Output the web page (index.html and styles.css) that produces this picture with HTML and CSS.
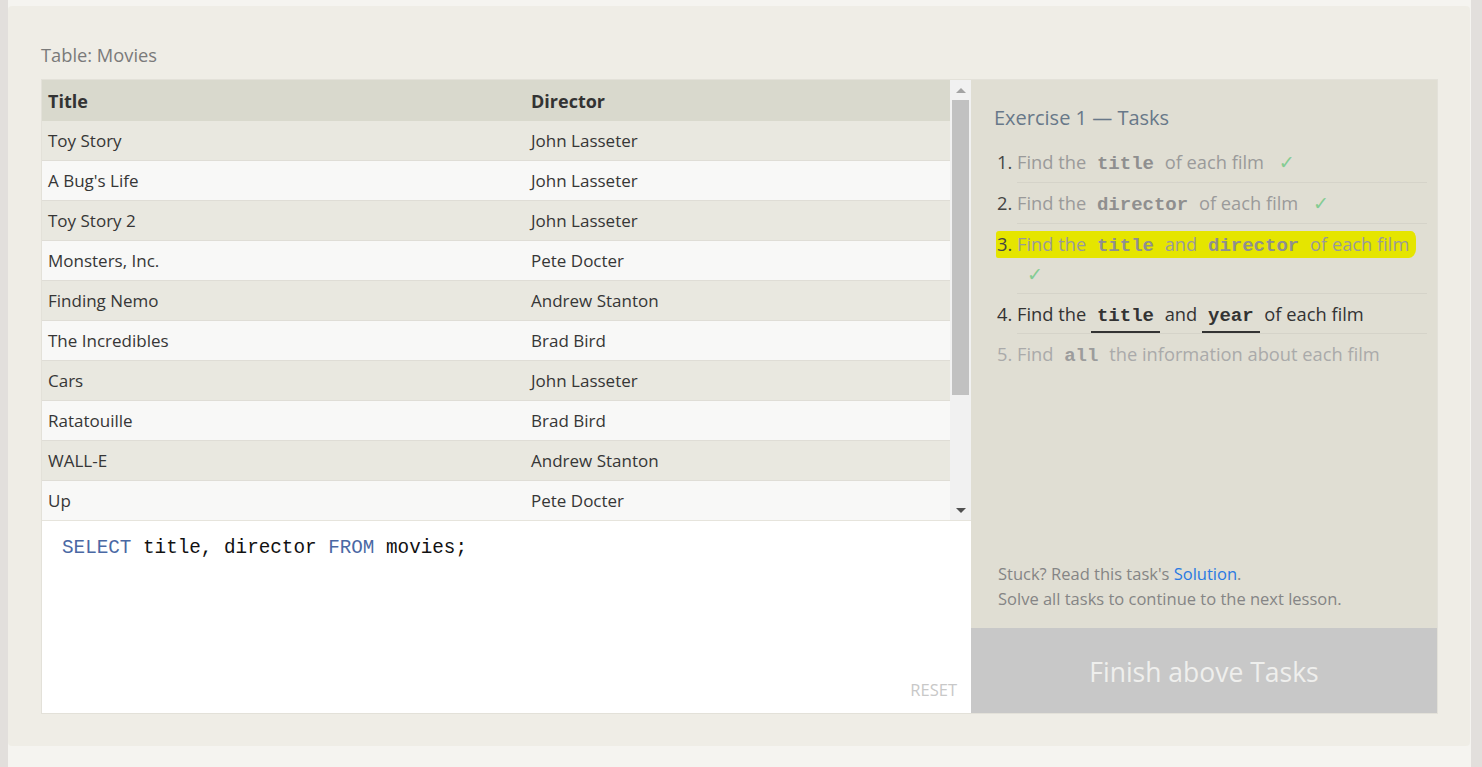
FILE: index.html
```html
<!DOCTYPE html>
<html>
<head>
<meta charset="utf-8">
<link rel="stylesheet" href="styles.css">
</head>
<body>
<div class="page">
  <div class="card">
    <div class="label">Table: Movies</div>
    <div class="widget">
      <div class="left">
        <div class="table-area">
          <div class="table-wrap">
            <table class="movies">
              <thead>
                <tr><th class="c1">Title</th><th>Director</th></tr>
              </thead>
              <tbody>
                <tr><td>Toy Story</td><td>John Lasseter</td></tr>
                <tr><td>A Bug's Life</td><td>John Lasseter</td></tr>
                <tr><td>Toy Story 2</td><td>John Lasseter</td></tr>
                <tr><td>Monsters, Inc.</td><td>Pete Docter</td></tr>
                <tr><td>Finding Nemo</td><td>Andrew Stanton</td></tr>
                <tr><td>The Incredibles</td><td>Brad Bird</td></tr>
                <tr><td>Cars</td><td>John Lasseter</td></tr>
                <tr><td>Ratatouille</td><td>Brad Bird</td></tr>
                <tr><td>WALL-E</td><td>Andrew Stanton</td></tr>
                <tr><td>Up</td><td>Pete Docter</td></tr>
              </tbody>
            </table>
          </div>
          <div class="scrollbar">
            <div class="sb-btn"><span class="tri-up"></span></div>
            <div class="sb-track"><div class="sb-thumb"></div></div>
            <div class="sb-btn"><span class="tri-down"></span></div>
          </div>
        </div>
        <div class="editor">
          <div class="code"><span class="kw">SELECT</span> title, director <span class="kw">FROM</span> movies;</div>
          <div class="reset">RESET</div>
        </div>
      </div>
      <div class="panel">
        <div class="tasks">
          <div class="heading">Exercise 1 — Tasks</div>
          <ol class="task-list">
            <li class="done"><span class="num">1.</span><div class="txt">Find the <code>title</code> of each film <span class="check">✓</span></div></li>
            <li class="done"><span class="num">2.</span><div class="txt">Find the <code>director</code> of each film <span class="check">✓</span></div></li>
            <li class="done marked"><span class="mark"></span><span class="num">3.</span><div class="txt">Find the <code>title</code> and <code>director</code> of each film <span class="check">✓</span></div></li>
            <li class="current"><span class="num">4.</span><div class="txt">Find the <code>title</code> and <code>year</code> of each film</div></li>
            <li class="future"><span class="num">5.</span><div class="txt">Find <code>all</code> the information about each film</div></li>
          </ol>
        </div>
        <div class="help">
          <div>Stuck? Read this task's <a class="link" href="#">Solution</a>.</div>
          <div>Solve all tasks to continue to the next lesson.</div>
        </div>
        <div class="finish">Finish above Tasks</div>
      </div>
    </div>
  </div>
</div>
</body>
</html>
```
FILE: styles.css
```css
html, body {
  margin: 0;
  padding: 0;
}
body {
  background: #e2dfdc;
  font-family: "Open Sans", "Noto Sans", sans-serif;
  overflow: hidden;
}
.page {
  margin-left: 8px;
  width: 1463px;
  height: 767px;
  background: #f5f4f0;
  padding-top: 6px;
  box-sizing: border-box;
}
.card {
  height: 740px;
  box-sizing: border-box;
  background: #efede6;
  border-radius: 4px;
  width: 1462px;
  padding: 35px 32px 0 33px;
}
.label {
  font-size: 18.3px;
  line-height: 27px;
  color: #7a7a7a;
  margin-bottom: 11px;
}
.widget {
  display: flex;
  height: 635px;
  box-sizing: border-box;
  border: 1px solid #e3e1d9;
}
.left {
  width: 929px;
  display: flex;
  flex-direction: column;
}
.table-area {
  height: 440px;
  display: flex;
  overflow: hidden;
  border-bottom: 1px solid #e6e4dc;
}
.table-wrap {
  flex: 1;
  overflow: hidden;
}
.movies {
  width: 100%;
  border-collapse: collapse;
  font-size: 17px;
  color: #363636;
}
.movies th {
  background: #d9d9cd;
  text-align: left;
  font-weight: 700;
  font-size: 18px;
  color: #333;
  height: 41px;
  padding: 0 6px;
  box-sizing: border-box;
}
.movies th.c1 {
  width: 483px;
}
.movies td {
  height: 39px;
  padding: 0 6px;
  border-bottom: 1px solid #dfddd6;
}
.movies tbody tr:nth-child(odd) td {
  background: #e9e8e0;
}
.movies tbody tr:nth-child(even) td {
  background: #f8f8f7;
}
.scrollbar {
  width: 21px;
  background: #f1f1f1;
  display: flex;
  flex-direction: column;
}
.sb-btn {
  height: 20px;
  display: flex;
  align-items: center;
  justify-content: center;
}
.sb-track {
  flex: 1;
  padding: 0 2px;
}
.sb-thumb {
  height: 295px;
  background: #c1c1c1;
}
.tri-up {
  width: 0;
  height: 0;
  border-left: 5px solid transparent;
  border-right: 5px solid transparent;
  border-bottom: 5px solid #a3a3a3;
}
.tri-down {
  width: 0;
  height: 0;
  border-left: 5px solid transparent;
  border-right: 5px solid transparent;
  border-top: 5px solid #505050;
}
.editor {
  flex: 1;
  background: #fff;
  display: flex;
  flex-direction: column;
  justify-content: space-between;
  padding: 14px 14px 13px 20px;
}
.code {
  font-family: "Liberation Mono", "DejaVu Sans Mono", monospace;
  font-size: 19.3px;
  line-height: 26px;
  color: #111;
}
.kw {
  color: #4a68a4;
}
.reset {
  align-self: flex-end;
  font-size: 16.5px;
  color: #c8c8c8;
  line-height: 20px;
}
.panel {
  width: 466px;
  background: #e0ded3;
  display: flex;
  flex-direction: column;
}
.tasks {
  flex: 1;
  padding: 23px 10px 0 23px;
}
.heading {
  font-size: 20px;
  line-height: 30px;
  color: #687889;
  margin-bottom: 9px;
}
.task-list {
  list-style: none;
  margin: 0 0 0 3px;
  padding: 0;
  font-size: 18.3px;
}
.task-list li {
  display: flex;
  position: relative;
  z-index: 0;
}
.num {
  width: 20px;
  flex: none;
  line-height: 30px;
  padding-top: 5px;
  color: #444;
}
.txt {
  flex: 1;
  line-height: 30px;
  padding: 5px 0;
  border-bottom: 1px solid #d5d3c9;
}
.marked .txt {
  padding-bottom: 4px;
}
.current .txt {
  padding-bottom: 4px;
}
.task-list li:last-child .txt {
  border-bottom: none;
}
.done .txt {
  color: #9a9a9a;
}
.current .txt, .current .num {
  color: #333;
}
.future .txt, .future .num {
  color: #aaa;
}
code {
  font-family: "Liberation Mono", "DejaVu Sans Mono", monospace;
  font-weight: 700;
  font-size: 19px;
  line-height: 1;
  padding: 0 6px;
}
.done code {
  color: #8f8f8f;
}
.current code {
  color: #333;
  border-bottom: 2px solid #333;
  padding-bottom: 4px;
}
.future code {
  color: #9c9c9c;
}
.check {
  font-family: "DejaVu Sans", sans-serif;
  font-size: 19px;
  line-height: 1;
  color: #84cc92;
  margin-left: 10px;
}
.mark {
  position: absolute;
  z-index: -1;
  left: -1px;
  top: 7px;
  width: 420px;
  height: 27px;
  background: #e5e500;
  border-radius: 3px 5px 7px 2px / 3px 8px 9px 2px;
}
.help {
  padding: 0 10px 17px 27px;
  font-size: 16.5px;
  line-height: 25px;
  color: #858585;
}
.link {
  color: #2a7ae2;
  text-decoration: none;
}
.finish {
  height: 85px;
  background: #c8c8c8;
  color: #efefed;
  font-size: 26.5px;
  display: flex;
  align-items: center;
  justify-content: center;
  padding-top: 2px;
  box-sizing: border-box;
}
```
